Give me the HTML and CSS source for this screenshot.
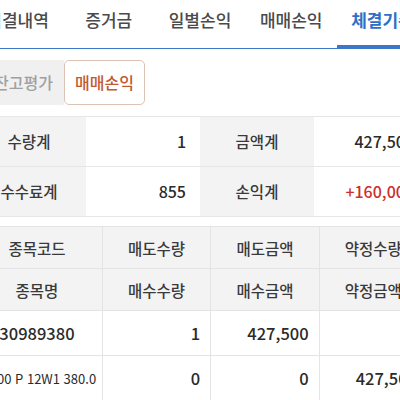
FILE: index.html
```html
<!DOCTYPE html>
<html lang="ko">
<head>
  <meta charset="UTF-8">
  <meta name="viewport" content="width=device-width, initial-scale=1.0">
  <link rel="stylesheet" href="styles.css">
</head>
<body>
  <div class="page">

    <div class="tabs">
      <div class="tab">미결내역</div>
      <div class="tab">증거금</div>
      <div class="tab">일별손익</div>
      <div class="tab">매매손익</div>
      <div class="tab active">체결기준</div>
    </div>

    <div class="sub-tabs">
      <div class="sub-tab">잔고평가</div>
      <div class="sub-tab selected">매매손익</div>
    </div>

    <div class="summary">
      <div class="sum-label">수량계</div>
      <div class="sum-value">1</div>
      <div class="sum-label">금액계</div>
      <div class="sum-value">427,500</div>
      <div class="sum-label">수수료계</div>
      <div class="sum-value">855</div>
      <div class="sum-label">손익계</div>
      <div class="sum-value plus">+160,000</div>
    </div>

    <table class="trade-table">
      <colgroup>
        <col class="col-name">
        <col class="col-num">
        <col class="col-num">
        <col class="col-num">
      </colgroup>
      <tr class="head-row">
        <th>종목코드</th>
        <th>매도수량</th>
        <th>매도금액</th>
        <th>약정수량</th>
      </tr>
      <tr class="head-row">
        <th>종목명</th>
        <th>매수수량</th>
        <th>매수금액</th>
        <th>약정금액</th>
      </tr>
      <tr class="data-row">
        <td class="code">30989380</td>
        <td>1</td>
        <td>427,500</td>
        <td>1</td>
      </tr>
      <tr class="data-row">
        <td class="code small">코200 P 12W1 380.0</td>
        <td>0</td>
        <td>0</td>
        <td>427,500</td>
      </tr>
    </table>

  </div>
</body>
</html>
```

FILE: styles.css
```css
* {
  margin: 0;
  padding: 0;
  box-sizing: border-box;
}

body {
  background: #fff;
  color: #2b2b2b;
  font-family: "Noto Sans CJK KR", "Noto Sans", sans-serif;
  font-weight: 500;
  overflow: hidden;
}

/* the app view is wider than the window, left part is scrolled off */
.page {
  width: 456px;
  margin-left: -28px;
}

.tabs {
  display: flex;
  border-bottom: 1px solid #3b78c9;
}
.tab {
  flex: 1;
  height: 48px;
  line-height: 40px;
  text-align: center;
  font-size: 17px;
  color: #4a4a4a;
  white-space: nowrap;
}
.tab.active {
  color: #2f6fc6;
  font-weight: bold;
  box-shadow: inset 0 -3px 0 #3b78c9;
}

.sub-tabs {
  display: flex;
  margin-top: 11px;
  padding-left: 11px;
}
.sub-tab {
  width: 81px;
  height: 45px;
  line-height: 43px;
  text-align: center;
  font-size: 16px;
  color: #a0a0a0;
  background: #f0f0f0;
  border: 1px solid #f0f0f0;
  border-radius: 5px 0 0 5px;
}
.sub-tab.selected {
  color: #c25a30;
  background: #fff;
  border-color: #dcc3b3;
  border-radius: 5px;
}

.summary {
  display: grid;
  grid-template-columns: repeat(4, 114px);
  margin-top: 11px;
  border-top: 1px solid #e6e6e6;
}
.sum-label, .sum-value {
  height: 50px;
  line-height: 49px;
  border-bottom: 1px solid #e6e6e6;
  font-size: 16px;
}
.sum-label {
  background: #f3f3f3;
  text-align: center;
  font-size: 15.5px;
  color: #3a3a3a;
}
.sum-value {
  text-align: right;
  padding-right: 14px;
}
.sum-value.plus {
  color: #cc2f2c;
}

.trade-table {
  width: 456px;
  margin-top: 9px;
  border-collapse: collapse;
  table-layout: fixed;
}
.col-name {
  width: 130px;
}
.col-num {
  width: 108px;
}
.trade-table th, .trade-table td {
  border: 1px solid #e4e4e4;
  white-space: nowrap;
  overflow: hidden;
}
.trade-table th {
  height: 42px;
  background: #f3f3f3;
  font-weight: 500;
  font-size: 15.5px;
  color: #3a3a3a;
}
.trade-table td {
  height: 45px;
  text-align: right;
  padding-right: 10px;
  font-size: 16.5px;
}
.trade-table td.code {
  text-align: center;
  padding-right: 0;
  overflow: visible;
}
.trade-table td.small {
  font-size: 13px;
  font-weight: 400;
}
.trade-table tr th:first-child, .trade-table tr td:first-child {
  border-left: none;
}
```
